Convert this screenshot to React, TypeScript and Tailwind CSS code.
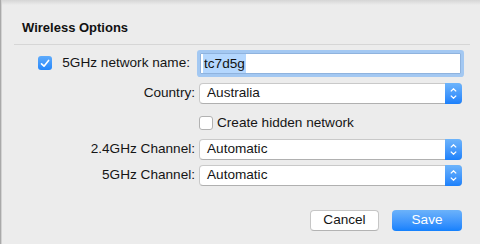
import React from "react";

const font = { fontFamily: '"Liberation Sans", Arial, sans-serif' };

function Stepper() {
  return (
    <div className="flex h-full w-[17px] flex-col items-center justify-center gap-[3px] rounded-r-[4px] bg-linear-to-b from-[#6db4fb] to-[#1a80fb]">
      <svg width="7" height="4" viewBox="0 0 7 4" fill="none">
        <path d="M0.8 3.4 L3.5 0.8 L6.2 3.4" stroke="white" strokeWidth="1.3" />
      </svg>
      <svg width="7" height="4" viewBox="0 0 7 4" fill="none">
        <path d="M0.8 0.6 L3.5 3.2 L6.2 0.6" stroke="white" strokeWidth="1.3" />
      </svg>
    </div>
  );
}

function Select({ value }: { value: string }) {
  return (
    <div className="flex h-[21px] w-[263px] items-stretch rounded-[4px] border border-[#c9c9c9] border-b-[#b0b0b0] bg-white">
      <div className="flex flex-1 items-center pl-[7px] text-[13.6px] text-[#151515]">{value}</div>
      <div className="-my-px -mr-px">
        <Stepper />
      </div>
    </div>
  );
}

export default function App() {
  return (
    <div
      style={font}
      className="flex h-[244px] w-[480px] flex-col overflow-hidden border-l border-[#a9a9a9] bg-[#ececec]"
    >
      <div className="flex h-full flex-col border-l border-[#d2d2d2]">
        <div className="h-[5px] bg-linear-to-b from-[#d5d5d5] to-[#ececec]" />
        <div className="pl-[20px] pt-[15px] text-[13px] font-bold leading-[16px] text-[#111]">
          Wireless Options
        </div>
        <div className="ml-[12px] mt-[8px] h-px w-[456px] bg-[#d6d6d6]" />

        {/* Row 1 */}
        <div className="mt-[8px] flex h-[21px] items-center">
          <div className="flex w-[193px] items-center justify-end gap-[10px] pr-[5px]">
            <div className="flex h-[14px] w-[14px] items-center justify-center rounded-[3px] bg-linear-to-b from-[#5eabfb] to-[#2387fb]">
              <svg width="10" height="9" viewBox="0 0 10 9" fill="none">
                <path d="M1.5 4.8 L4 7.2 L8.6 1.4" stroke="white" strokeWidth="1.6" strokeLinecap="round" strokeLinejoin="round" />
              </svg>
            </div>
            <span className="text-[13.6px] text-[#151515]">5GHz network name:</span>
          </div>
          <div className="ml-[5px] flex h-[21px] w-[261px] items-center rounded-[1px] border border-[#8fb3de] bg-white pl-[2px] shadow-[0_0_0_3px_#a3c8f2]">
            <span className="bg-[#b4d7fe] px-px text-[13.6px] leading-[19px] text-[#111]">tc7d5g</span>
          </div>
        </div>

        {/* Row 2 */}
        <div className="mt-[9px] flex h-[21px] items-center">
          <div className="w-[193px] text-right text-[13.6px] text-[#151515]">Country:</div>
          <div className="ml-[4px]">
            <Select value="Australia" />
          </div>
        </div>

        {/* Row 3 */}
        <div className="mt-[12px] flex h-[14px] items-center">
          <div className="ml-[197px] flex items-center gap-[4px]">
            <div className="h-[14px] w-[14px] rounded-[3px] border border-[#b2b2b2] bg-white" />
            <span className="text-[13.6px] text-[#151515]">Create hidden network</span>
          </div>
        </div>

        {/* Row 4 */}
        <div className="mt-[9px] flex h-[21px] items-center">
          <div className="w-[193px] text-right text-[13.6px] text-[#151515]">2.4GHz Channel:</div>
          <div className="ml-[4px]">
            <Select value="Automatic" />
          </div>
        </div>

        {/* Row 5 */}
        <div className="mt-[5px] flex h-[21px] items-center">
          <div className="w-[193px] text-right text-[13.6px] text-[#151515]">5GHz Channel:</div>
          <div className="ml-[4px]">
            <Select value="Automatic" />
          </div>
        </div>

        {/* Buttons */}
        <div className="mt-[24px] flex justify-end gap-[13px] pr-[18px]">
          <div className="flex h-[21px] w-[69px] items-center justify-center rounded-[4px] border border-[#c6c6c6] border-b-[#b3b3b3] bg-white text-[13.6px] text-[#151515]">
            Cancel
          </div>
          <div className="flex h-[21px] w-[70px] items-center justify-center rounded-[4px] bg-linear-to-b from-[#6bb2fa] to-[#1280fd] text-[13.6px] text-white">
            Save
          </div>
        </div>
      </div>
    </div>
  );
}
